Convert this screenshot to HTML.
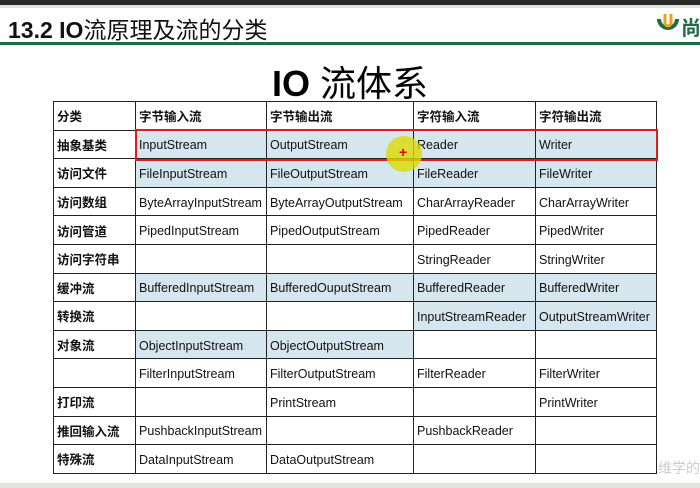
<!DOCTYPE html>
<html><head><meta charset="utf-8"><style>
body{margin:0;width:700px;height:488px;overflow:hidden;background:#fff;position:relative;font-family:"Liberation Sans","Noto Sans CJK SC",sans-serif}
.top{position:absolute;left:0;top:0;width:700px;height:5px;background:#2a2a2a}
.top2{position:absolute;left:0;top:5px;width:700px;height:3px;background:#dfe3df}
.title{position:absolute;left:8px;top:11px;font-size:23px;color:#111;white-space:nowrap}
.title b{font-weight:bold}
.gl{position:absolute;left:0;top:42px;width:700px;height:3px;background:#1e6b47}
.h1{position:absolute;left:0;width:700px;top:55px;text-align:center;font-size:36px;color:#000}
table{position:absolute;left:53px;top:101px;border-collapse:collapse}
tr{height:28.6px}
td{border:1.5px solid #222;padding:2px 0 0 3px;font-size:12.5px;color:#111;white-space:nowrap}
td.k{font-weight:bold;font-family:"Noto Sans CJK SC",sans-serif;font-size:12.5px;padding-top:0}
.b{background:#d6e6ef}
.red{position:absolute;left:135px;top:129px;width:519px;height:28px;border:2px solid #e21a1a}
.yc{position:absolute;left:386px;top:136px;width:36px;height:36px;border-radius:50%;background:rgba(220,220,0,.8)}
.plus{position:absolute;left:399px;top:144px;color:#d00;font-size:14px;font-weight:bold}
.foot{position:absolute;left:0;top:483px;width:700px;height:5px;background:#e2e5e2}
</style></head><body>
<div class="top"></div><div class="top2"></div>
<div class="title"><b>13.2 IO</b>流原理及流的分类</div>
<svg style="position:absolute;left:657px;top:11px" width="22" height="24" viewBox="0 0 22 24"><path d="M2 8 A9 9 0 0 0 20 8" fill="none" stroke="#1e6b47" stroke-width="4"/><path d="M8 3 V12 A3 3 0 0 0 14 12 V3" fill="none" stroke="#f0a010" stroke-width="3"/></svg>
<div style="position:absolute;left:681px;top:12px;font-size:20px;color:#1e6b47;font-weight:bold">尚</div>
<div class="gl"></div>
<div class="h1"><span style="font-weight:bold">IO</span> 流体系</div>
<table>
<colgroup><col style="width:82px"><col style="width:131px"><col style="width:147px"><col style="width:122px"><col style="width:121px"></colgroup>
<tr><td class="k">分类</td><td class="k">字节输入流</td><td class="k">字节输出流</td><td class="k">字符输入流</td><td class="k">字符输出流</td></tr>
<tr><td class="k">抽象基类</td><td class="b">InputStream</td><td class="b">OutputStream</td><td class="b">Reader</td><td class="b">Writer</td></tr>
<tr><td class="k">访问文件</td><td class="b">FileInputStream</td><td class="b">FileOutputStream</td><td class="b">FileReader</td><td class="b">FileWriter</td></tr>
<tr><td class="k">访问数组</td><td>ByteArrayInputStream</td><td>ByteArrayOutputStream</td><td>CharArrayReader</td><td>CharArrayWriter</td></tr>
<tr><td class="k">访问管道</td><td>PipedInputStream</td><td>PipedOutputStream</td><td>PipedReader</td><td>PipedWriter</td></tr>
<tr><td class="k">访问字符串</td><td></td><td></td><td>StringReader</td><td>StringWriter</td></tr>
<tr><td class="k">缓冲流</td><td class="b">BufferedInputStream</td><td class="b">BufferedOuputStream</td><td class="b">BufferedReader</td><td class="b">BufferedWriter</td></tr>
<tr><td class="k">转换流</td><td></td><td></td><td class="b">InputStreamReader</td><td class="b">OutputStreamWriter</td></tr>
<tr><td class="k">对象流</td><td class="b">ObjectInputStream</td><td class="b">ObjectOutputStream</td><td></td><td></td></tr>
<tr><td class="k"></td><td>FilterInputStream</td><td>FilterOutputStream</td><td>FilterReader</td><td>FilterWriter</td></tr>
<tr><td class="k">打印流</td><td></td><td>PrintStream</td><td></td><td>PrintWriter</td></tr>
<tr><td class="k">推回输入流</td><td>PushbackInputStream</td><td></td><td>PushbackReader</td><td></td></tr>
<tr><td class="k">特殊流</td><td>DataInputStream</td><td>DataOutputStream</td><td></td><td></td></tr>
</table>
<div class="red"></div>
<div class="yc"></div><div class="plus">+</div>
<div style="position:absolute;left:658px;top:458px;font-size:14px;color:#ccc">维学的</div>
<div class="foot"></div>
</body></html>
